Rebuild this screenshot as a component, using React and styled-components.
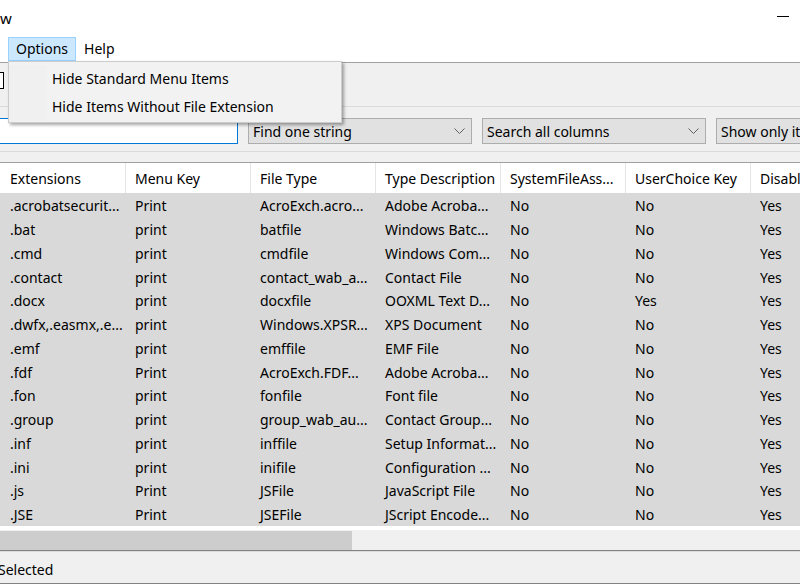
import React from 'react'
import styled, { createGlobalStyle } from 'styled-components'

const GlobalStyle = createGlobalStyle`
  html, body {
    margin: 0;
    padding: 0;
    background: #ffffff;
  }
  body {
    font-family: "Noto Sans", "Open Sans", sans-serif;
    font-size: 14px;
    color: #000;
  }
`

const Window = styled.div`
  position: relative;
  width: 800px;
  height: 584px;
  overflow: hidden;
  display: flex;
  flex-direction: column;
  background: #f0f0f0;
`

const TitleBar = styled.div`
  height: 36px;
  flex: none;
  display: flex;
  align-items: center;
  justify-content: space-between;
  background: #ffffff;
`

const Title = styled.span`
  font-size: 15px;
  padding-bottom: 1px;
`

const MinGlyph = styled.span`
  width: 12px;
  height: 1px;
  background: #000;
  margin-right: 11px;
  margin-bottom: 3px;
`

const MenuBar = styled.div`
  height: 26px;
  flex: none;
  display: flex;
  align-items: center;
  padding-left: 8px;
  background: #ffffff;
  border-bottom: 1px solid #a0a0a0;
  position: relative;
  z-index: 5;
`

const MenuItem = styled.div`
  position: relative;
  height: 22px;
  line-height: 22px;
  padding: 0 7px;
  border: 1px solid ${p => (p.$open ? '#99d1ff' : 'transparent')};
  background: ${p => (p.$open ? '#cce8ff' : 'transparent')};
`

const Dropdown = styled.div`
  position: absolute;
  left: -1px;
  top: 23px;
  width: 332px;
  padding: 3px 0 1px;
  background: #f2f2f2;
  border: 1px solid #cccccc;
  box-shadow: 2px 2px 3px rgba(0, 0, 0, 0.35);
  display: flex;
  flex-direction: column;
`

const DropdownItem = styled.div`
  height: 28px;
  line-height: 28px;
  padding-left: 43px;
  white-space: nowrap;
  background: linear-gradient(to right, #f0f0f0 0 38px, transparent 38px);
`

const Toolbar = styled.div`
  height: 43px;
  flex: none;
  border-bottom: 1px solid #dadada;
  display: flex;
  align-items: flex-start;
`

const ToolIcon = styled.span`
  width: 14px;
  height: 15px;
  margin-left: -12px;
  margin-top: 9px;
  border: 1px solid #000;
  background: #ffffff;
`

const FilterRow = styled.div`
  height: 45px;
  flex: none;
  box-sizing: border-box;
  padding-top: 11px;
  display: flex;
  gap: 10px;
  border-bottom: 1px solid #dadada;
`

const SearchBox = styled.div`
  width: 238px;
  height: 26px;
  box-sizing: border-box;
  flex: none;
  background: #ffffff;
  border: 1px solid #0078d7;
  border-left: none;
`

const Combo = styled.div`
  width: ${p => p.$w}px;
  height: 26px;
  box-sizing: border-box;
  flex: none;
  display: flex;
  align-items: center;
  justify-content: space-between;
  padding: 0 6px 0 4px;
  background: #e1e1e1;
  border: 1px solid #adadad;
  white-space: nowrap;
  overflow: hidden;
`

const ListView = styled.div`
  margin-top: 10px;
  flex: none;
  display: flex;
  flex-direction: column;
  background: #ffffff;
  border-top: 1px solid #a0a0a0;
`

const Grid = styled.div`
  display: grid;
  grid-template-columns: 126px repeat(6, 125px);
  grid-template-rows: 30px;
  grid-auto-rows: 23.75px;
  height: 367px;
  align-content: start;
`

const HeadCell = styled.div`
  box-sizing: border-box;
  padding-left: ${p => (p.$first ? 10 : 9)}px;
  display: flex;
  align-items: center;
  white-space: nowrap;
  overflow: hidden;
  border-right: 1px solid #e5e5e5;
  background: #ffffff;
`

const Cell = styled.div`
  box-sizing: border-box;
  padding: 2px 0 0 ${p => (p.$first ? 10 : 9)}px;
  display: flex;
  align-items: center;
  white-space: nowrap;
  overflow: hidden;
  background: #d9d9d9;
`

const HScroll = styled.div`
  height: 20px;
  box-sizing: border-box;
  padding-top: 1px;
  background: #f0f0f0;
`

const Thumb = styled.div`
  width: 352px;
  height: 19px;
  background: #cdcdcd;
`

const StatusBar = styled.div`
  flex: 1;
  display: flex;
  align-items: center;
  padding-top: 5px;
  border-top: 1px solid #828282;
  box-shadow: inset 0 1px 0 #dcdcdc;
  border-bottom: 1px solid #828282;
`

const StatusText = styled.span`
  margin-left: -2px;
`

const Chevron = () => (
  <svg width="11" height="7" viewBox="0 0 11 7">
    <polyline points="0.5,0.5 5.5,5.5 10.5,0.5" fill="none" stroke="#606060" strokeWidth="1" />
  </svg>
)

const headers = ['Extensions', 'Menu Key', 'File Type', 'Type Description', 'SystemFileAss...', 'UserChoice Key', 'Disabled']

const rows = [
  ['.acrobatsecurit...', 'Print', 'AcroExch.acro...', 'Adobe Acroba...', 'No', 'No', 'Yes'],
  ['.bat', 'print', 'batfile', 'Windows Batc...', 'No', 'No', 'Yes'],
  ['.cmd', 'print', 'cmdfile', 'Windows Com...', 'No', 'No', 'Yes'],
  ['.contact', 'print', 'contact_wab_a...', 'Contact File', 'No', 'No', 'Yes'],
  ['.docx', 'print', 'docxfile', 'OOXML Text D...', 'No', 'Yes', 'Yes'],
  ['.dwfx,.easmx,.e...', 'print', 'Windows.XPSR...', 'XPS Document', 'No', 'No', 'Yes'],
  ['.emf', 'print', 'emffile', 'EMF File', 'No', 'No', 'Yes'],
  ['.fdf', 'Print', 'AcroExch.FDF...', 'Adobe Acroba...', 'No', 'No', 'Yes'],
  ['.fon', 'print', 'fonfile', 'Font file', 'No', 'No', 'Yes'],
  ['.group', 'print', 'group_wab_au...', 'Contact Group...', 'No', 'No', 'Yes'],
  ['.inf', 'print', 'inffile', 'Setup Informat...', 'No', 'No', 'Yes'],
  ['.ini', 'print', 'inifile', 'Configuration ...', 'No', 'No', 'Yes'],
  ['.js', 'Print', 'JSFile', 'JavaScript File', 'No', 'No', 'Yes'],
  ['.JSE', 'Print', 'JSEFile', 'JScript Encode...', 'No', 'No', 'Yes'],
]

const App = () => {
  return (
    <Window>
      <GlobalStyle />
      <TitleBar>
        <Title>w</Title>
        <MinGlyph />
      </TitleBar>
      <MenuBar>
        <MenuItem $open>
          Options
          <Dropdown>
            <DropdownItem>Hide Standard Menu Items</DropdownItem>
            <DropdownItem>Hide Items Without File Extension</DropdownItem>
          </Dropdown>
        </MenuItem>
        <MenuItem>Help</MenuItem>
      </MenuBar>
      <Toolbar>
        <ToolIcon />
      </Toolbar>
      <FilterRow>
        <SearchBox />
        <Combo $w={224}>
          Find one string
          <Chevron />
        </Combo>
        <Combo $w={224}>
          Search all columns
          <Chevron />
        </Combo>
        <Combo $w={200}>Show only items</Combo>
      </FilterRow>
      <ListView>
        <Grid>
          {headers.map((h, j) => (
            <HeadCell key={h} $first={j === 0}>{h}</HeadCell>
          ))}
          {rows.map((r, i) =>
            r.map((c, j) => (
              <Cell key={i + '-' + j} $first={j === 0}>{c}</Cell>
            ))
          )}
        </Grid>
        <HScroll>
          <Thumb />
        </HScroll>
      </ListView>
      <StatusBar>
        <StatusText>Selected</StatusText>
      </StatusBar>
    </Window>
  )
}

export default App
